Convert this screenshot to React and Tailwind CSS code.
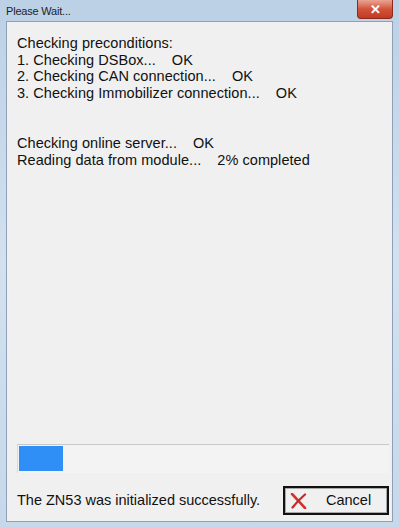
import { useState } from 'react'

const CHECKS = [
    'Checking preconditions:',
    ['1. Checking DSBox...', 'OK'],
    ['2. Checking CAN connection...', 'OK'],
    ['3. Checking Immobilizer connection...', 'OK'],
]

function CancelIcon() {
    return (
        <svg width="18" height="16" viewBox="0 0 18 16" className="shrink-0">
            <path d="M2 1 C6 5 10 10 15 15" stroke="#d0342c" strokeWidth="2.6" fill="none" strokeLinecap="round" />
            <path d="M15 1.5 C11 5 6 10 2.5 14.5" stroke="#c4282a" strokeWidth="2.2" fill="none" strokeLinecap="round" />
        </svg>
    )
}

function Line({ left, right }) {
    return (
        <div className="h-[16.7px] leading-[16.7px] whitespace-pre">
            {left}
            {right && <span className="ml-[16px]">{right}</span>}
        </div>
    )
}

export default function App() {
    const [progress] = useState(12)

    return (
        <div className="w-[399px] h-[527px] bg-gradient-to-b from-[#bcd0e6] via-[#d3e1ef] to-[#c6d8ea] flex flex-col px-[6px] pb-[5px] font-['Liberation_Sans',Arial,sans-serif] text-[#111]">
            {/* title bar */}
            <div className="h-[21px] flex items-start justify-between shrink-0">
                <div className="pt-[6px] text-[11px] leading-none text-[#1e1e1e] tracking-[-0.2px]">Please Wait...</div>
                <div className="w-[36px] h-[19px] rounded-b-[4px] border border-[#8a2b1e] border-t-0 bg-gradient-to-b from-[#e9a593] via-[#d2533b] to-[#c23a22] flex items-center justify-center">
                    <span className="text-white text-[13px] font-bold leading-none">✕</span>
                </div>
            </div>

            {/* client area */}
            <div className="flex-1 bg-[#f0f0f0] border border-[#8da2b8] flex flex-col pl-[10px] pr-[2px]">
                <div className="pt-[13px] text-[14.5px] tracking-[0.05px]">
                    <Line left={CHECKS[0]} />
                    <Line left={CHECKS[1][0]} right="OK" />
                    <Line left={CHECKS[2][0]} right="OK" />
                    <Line left={CHECKS[3][0]} right="OK" />
                    <div className="h-[33.4px]" />
                    <Line left="Checking online server..." right="OK" />
                    <Line left="Reading data from module..." right="2% completed" />
                </div>

                <div className="flex-1" />

                <div className="h-[29px] mr-[1px] border-t border-[#c8c8c8] border-l border-l-[#dadada] bg-[#f3f3f3] pl-[1px] pt-[1px] pb-[2px]">
                    <div className="h-full bg-[#2f8ff6]" style={{ width: `${progress}%` }} />
                </div>

                <div className="flex items-center justify-between pt-[13px] pb-[6px]">
                    <span className="text-[14.5px] leading-none">The ZN53 was initialized successfully.</span>
                    <button
                        type="button"
                        className="w-[106px] h-[29px] border-2 border-[#111] bg-[#f0f0f0] p-0 mr-[1px]"
                    >
                        <div className="h-full w-full border border-[#a8a8a8] flex items-center pl-[4px]">
                            <CancelIcon />
                            <span className="ml-[18px] text-[14.5px] leading-none">Cancel</span>
                        </div>
                    </button>
                </div>
            </div>
        </div>
    )
}
